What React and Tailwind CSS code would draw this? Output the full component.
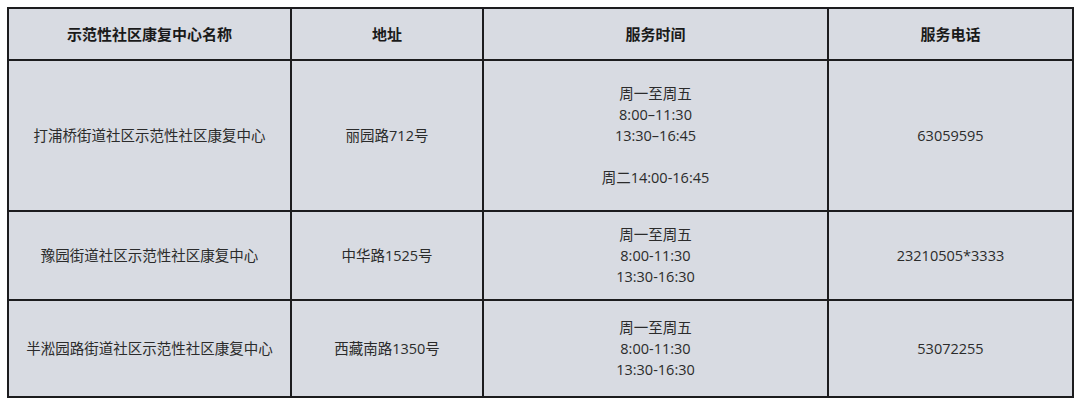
const rows = [
  {
    name: "打浦桥街道社区示范性社区康复中心",
    address: "丽园路712号",
    time: ["周一至周五", "8:00–11:30", "13:30–16:45", "", "周二14:00-16:45"],
    phone: "63059595",
    h: "h-[151px]",
  },
  {
    name: "豫园街道社区示范性社区康复中心",
    address: "中华路1525号",
    time: ["周一至周五", "8:00-11:30", "13:30-16:30"],
    phone: "23210505*3333",
    h: "h-[89px]",
  },
  {
    name: "半淞园路街道社区示范性社区康复中心",
    address: "西藏南路1350号",
    time: ["周一至周五", "8:00-11:30", "13:30-16:30"],
    phone: "53072255",
    h: "h-[97px]",
  },
];

function App() {
  return (
    <div className="w-[1080px] h-[401px] bg-white pt-[7px] pl-[7px] font-['Open_Sans','Noto_Sans_CJK_SC',sans-serif]">
      <table className="w-[1065px] table-fixed border-collapse border-2 border-[#1c1c1e] bg-[#d8dbe2] text-center">
        <colgroup>
          <col className="w-[283px]" />
          <col className="w-[192px]" />
          <col className="w-[345px]" />
          <col className="w-[245px]" />
        </colgroup>
        <thead>
          <tr className="h-[52px]">
            {["示范性社区康复中心名称", "地址", "服务时间", "服务电话"].map((t) => (
              <th
                key={t}
                className="border-2 border-[#1c1c1e] text-[15px] font-bold text-[#1a1a1a] font-['Noto_Sans_CJK_SC',sans-serif]"
              >
                {t}
              </th>
            ))}
          </tr>
        </thead>
        <tbody className="text-[14.5px] leading-[21px] text-[#2b2b2b]">
          {rows.map((r) => (
            <tr key={r.name} className={r.h}>
              <td className="border-2 border-[#1c1c1e]">{r.name}</td>
              <td className="border-2 border-[#1c1c1e]">{r.address}</td>
              <td className="border-2 border-[#1c1c1e]">
                {r.time.map((l, i) => (
                  <div key={i} className="h-[21px]">
                    {l}
                  </div>
                ))}
              </td>
              <td className="border-2 border-[#1c1c1e]">{r.phone}</td>
            </tr>
          ))}
        </tbody>
      </table>
    </div>
  );
}

export default App;
